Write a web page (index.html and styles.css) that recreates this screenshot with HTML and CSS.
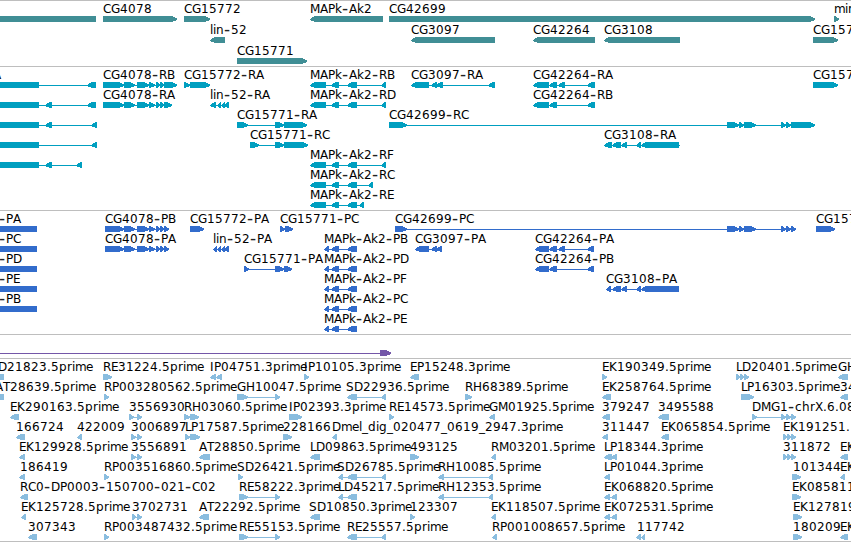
FILE: index.html
```html
<!DOCTYPE html>
<html lang="en">
<head>
  <meta charset="UTF-8" />
  <title>Genome Browser</title>
  <link rel="stylesheet" href="styles.css">
</head>
<body>
  <div class="browser">
    <div class="track genes" id="genes"></div>
    <div class="track transcripts" id="transcripts"></div>
    <div class="track proteins" id="proteins"></div>
    <div class="track span" id="span"></div>
    <div class="track ests" id="ests"></div>
  </div>
  <script src="tracks.js"></script>
</body>
</html>
```
FILE: styles.css
```css
body {
  margin: 0;
  background-color: #fff;
  overflow: hidden;
}

.browser {
  display: flex;
  flex-direction: column;
  width: 851px;
  height: 541px;
  border-bottom: 1px solid #bebebe;
}

.track {
  display: flex;
  flex-direction: column;
  border-top: 1px solid #bebebe;
}

.row {
  display: block;
  width: 851px;
  height: 20px;
  overflow: visible;
  shape-rendering: crispEdges;
}

.row text {
  font-family: "DejaVu Sans", sans-serif;
  font-size: 12px;
  fill: #000;
}

/* wide dash */
.row .dash {
  font-size: 17px;
  fill: #222;
}

.genes {
  padding-bottom: 2px;
  color: #408e95;
}

.genes .row {
  height: 21px;
}

.transcripts {
  padding-bottom: 3px;
  color: #009fc0;
}

.proteins {
  padding-bottom: 3px;
  color: #326ccc;
}

.span {
  padding-bottom: 3px;
  color: #7457a8;
}

.ests {
  color: #8abddf;
}

.row path {
  fill: currentColor;
}
```
FILE: tracks.js
```js
// feature: [label x, label, strand, "start-end start-end ...", line start, line end]
const cds = "124-135 137-149 149-155 156-160 160-164 ";
const mapk = "310-326 331-339 347-357 ";
const mapkP = "324-329 331-339 347-357";
const tail = "727-739 739-744 744-756 781-786 786-791 ";
const rna42264 = "533-549 549-557 ";

const tracks = {
  genes: [
    [
      [0, "", "", "0-96"],
      [103, "CG4078", ">", "103-177"],
      [184, "CG15772", ">", "184-210"],
      [310, "MAPk-Ak2", "<", "310-383"],
      [389, "CG42699", ">", "389-815"],
      [834, "mir", ">", "834-839"]
    ],
    [
      [210, "lin-52", "<", "210-225"],
      [411, "CG3097", "<", "411-495"],
      [533, "CG42264", "<", "533-595"],
      [604, "CG3108", "<", "604-680"],
      [813, "CG157", ">", "813-838"]
    ],
    [[237, "CG15771", ">", "237-307"]]
  ],
  transcripts: [
    [
      [-7, "A", "", "0-39"],
      [0, "", "<", "87-96", 39],
      [103, "CG4078-RB", ">", "103-124 " + cds + "164-177"],
      [184, "CG15772-RA", ">", "184-190 190-210"],
      [310, "MAPk-Ak2-RB", "<", mapk + "381-386"],
      [411, "CG3097-RA", "<", "411-429 431-437 436-443 488-495"],
      [533, "CG42264-RA", "<", rna42264 + "558-565 587-595"],
      [813, "CG157", ">", "813-838"]
    ],
    [
      [0, "", "", "0-39"],
      [0, "", "<", "45-52 87-96", 39],
      [103, "CG4078-RA", ">", "103-124 " + cds + "164-172"],
      [210, "lin-52-RA", "<", "210-216 217-221 221-225 224-229"],
      [310, "MAPk-Ak2-RD", "<", mapk + "381-386"],
      [533, "CG42264-RB", "<", rna42264 + "587-595"]
    ],
    [
      [0, "", "", "0-39"],
      [0, "", "<", "45-52 91-97", 39],
      [237, "CG15771-RA", ">", "237-248 275-284 284-307"],
      [389, "CG42699-RC", ">", "389-407 " + tail + "791-815"]
    ],
    [
      [0, "", "", "0-39"],
      [0, "", "<", "91-97", 39],
      [250, "CG15771-RC", ">", "250-259 275-284 284-308"],
      [604, "CG3108-RA", "<", "604-612 612-621 621-627 636-641 641-679", 604, 680]
    ],
    [
      [0, "", "", "0-39"],
      [0, "", "<", "45-52 76-82", 39],
      [310, "MAPk-Ak2-RF", "<", mapk + "381-386"]
    ],
    [[310, "MAPk-Ak2-RC", "<", mapk + "368-373"]],
    [[310, "MAPk-Ak2-RE", "<", mapk + "359-364"]]
  ],
  proteins: [
    [
      [-1, "-PA", "", "0-37"],
      [105, "CG4078-PB", ">", "105-124 " + cds + "164-169"],
      [190, "CG15772-PA", ">", "190-204"],
      [280, "CG15771-PC", ">", "280-285 285-293"],
      [395, "CG42699-PC", ">", "395-407 " + tail + "791-796"],
      [816, "CG157", ">", "816-835"]
    ],
    [
      [-1, "-PC", "", "0-37"],
      [105, "CG4078-PA", ">", "105-124 " + cds + "164-169"],
      [213, "lin-52-PA", "<", "213-217 217-221 221-225 224-229"],
      [324, "MAPk-Ak2-PB", "<", mapkP],
      [415, "CG3097-PA", "<", "415-429 431-437 436-442"],
      [535, "CG42264-PA", "<", "535-549 549-557 558-565 587-594"]
    ],
    [
      [-1, "-PD", "", "0-37"],
      [244, "CG15771-PA", ">", "244-249 275-284 284-292"],
      [324, "MAPk-Ak2-PD", "<", mapkP],
      [535, "CG42264-PB", "<", "535-549 549-557 587-594"]
    ],
    [
      [-1, "-PE", "", "0-37"],
      [324, "MAPk-Ak2-PF", "<", mapkP],
      [606, "CG3108-PA", "<", "606-611 612-621 621-627 636-641 641-679"]
    ],
    [
      [-1, "-PB", "", "0-37"],
      [324, "MAPk-Ak2-PC", "<", mapkP]
    ],
    [[324, "MAPk-Ak2-PE", "<", mapkP]]
  ],
  span: [
    [[0, "", ">", "380-391", 0]]
  ],
  ests: [
    [
      [-8, "LD21823.5prime", "", "0-4"],
      [103, "RE31224.5prime", ">", "103-112"],
      [210, "IP04751.3prime", "<", "210-216 216-222"],
      [304, "IP10105.3prime", ">", "304-309"],
      [410, "EP15248.3prime", "<", "410-419"],
      [602, "EK190349.5prime", ">", "602-607"],
      [736, "LD20401.5prime", ">", "736-740 740-744 744-749"],
      [838, "GH", "<", "838-848"]
    ],
    [
      [-5, "AT28639.5prime", "", "0-4"],
      [104, "RP003280562.5prime", ">", "104-109"],
      [237, "GH10047.5prime", ">", "237-248 275-280"],
      [346, "SD22936.5prime", "<", "347-357 381-386"],
      [465, "RH68389.5prime", ">", "465-472"],
      [602, "EK258764.5prime", "<", "602-611"],
      [741, "LP16303.5prime", ">", "741-745 743-754"],
      [840, "34", "<", "840-848"]
    ],
    [
      [10, "EK290163.5prime", "<", "10-19"],
      [129, "3556930", ">", "129-134 137-142"],
      [184, "RH03060.5prime", ">", "184-190 190-199"],
      [289, "IP02393.3prime", ">", "289-302"],
      [389, "RE14573.5prime", ">", "389-394"],
      [489, "GM01925.5prime", "<", "489-495"],
      [602, "379247", "<", "602-610"],
      [658, "3495588", "<", "658-669"],
      [752, "DMG1-chrX.6.08", ">", "752-757 781-786 786-791 791-796"]
    ],
    [
      [16, "166724", "<", "16-25"],
      [77, "422009", "<", "77-82"],
      [131, "3006897", ">", "131-136 137-142"],
      [185, "LP17587.5prime", ">", "185-190 190-200"],
      [283, "228166", ">", "283-292"],
      [332, "Dmel_dig_020477_0619_2947.3prime", "<", "332-337"],
      [602, "311447", "<", "602-608"],
      [661, "EK065854.5prime", "<", "661-669"],
      [783, "EK191251.", ">", "783-787 787-791 791-796"]
    ],
    [
      [19, "EK129928.5prime", "<", "19-25"],
      [131, "3556891", ">", "131-136 137-142"],
      [199, "AT28850.5prime", "<", "199-210"],
      [310, "LD09863.5prime", "<", "310-320"],
      [410, "493125", ">", "410-419"],
      [491, "RM03201.5prime", "<", "491-496"],
      [604, "LP18344.3prime", "<", "604-612 611-617"],
      [783, "311872", ">", "783-787 787-791 791-796"],
      [840, "EK", "<", "840-848"]
    ],
    [
      [20, "186419", "<", "19-25"],
      [104, "RP003516860.5prime", ">", "104-109"],
      [237, "SD26421.5prime", ">", "238-243"],
      [337, "SD26785.5prime", "<", "338-343 347-357 381-386"],
      [438, "RH10085.5prime", "<", "438-444 488-493"],
      [604, "LP01044.3prime", "<", "604-610"],
      [793, "101344", ">", "792-801"],
      [840, "EK", "<", "840-845"]
    ],
    [
      [20, "RC0-DP0003-150700-021-C02", "<", "20-28"],
      [239, "RE58222.3prime", ">", "239-248 275-280"],
      [338, "LD45217.5prime", "<", "338-343 347-357"],
      [438, "RH12353.5prime", "<", "438-444 488-493"],
      [604, "EK068820.5prime", "<", "604-610 611-617"],
      [792, "EK085811", ">", "792-801"]
    ],
    [
      [21, "EK125728.5prime", "<", "21-26"],
      [132, "3702731", ">", "132-136 137-142"],
      [199, "AT22292.5prime", "<", "199-209"],
      [309, "SD10850.3prime", "<", "310-320"],
      [410, "123307", ">", "410-415"],
      [491, "EK118507.5prime", "<", "491-496"],
      [604, "EK072531.5prime", "<", "604-610 611-617"],
      [793, "EK127819", ">", "793-802"]
    ],
    [
      [28, "307343", "<", "28-37"],
      [104, "RP003487432.5prime", ">", "104-109"],
      [239, "RE55153.5prime", ">", "239-248 275-280"],
      [347, "RE25557.5prime", "<", "347-357 381-386"],
      [492, "RP001008657.5prime", "<", "492-497"],
      [637, "117742", "<", "636-641 641-645"],
      [793, "180209", ">", "793-802"],
      [840, "EK", "<", "840-848"]
    ]
  ]
};

// whole pixel advance of each letter, digits are 8
const advance = {
  A: 8, B: 8, C: 8, D: 9, E: 7, F: 7, G: 9, H: 9, I: 4, K: 8, L: 6, M: 10, P: 7, R: 8, S: 8, T: 7, X: 8,
  c: 7, d: 8, e: 7, g: 8, h: 8, i: 3, k: 7, l: 3, m: 11, n: 8, p: 8, r: 5, "-": 7, "_": 6, ".": 4
};
const NS = "http://www.w3.org/2000/svg";

function add(parent, name, attrs) {
  const el = document.createElementNS(NS, name);
  for (const key in attrs) el.setAttribute(key, attrs[key]);
  parent.appendChild(el);
  return el;
}

// all outlines run clockwise so that they merge with the line
function exon(a, b, strand) {
  const head = Math.min(5, b - a - 1);
  if (strand === ">") return `M${a} 15H${b - head}L${b - 1} 17L${b} 18V19L${b - head} 21H${a}Z`;
  if (strand === "<") return `M${a + head} 15H${b}V21H${a + head}L${a} 19V18L${a + 1} 17Z`;
  return `M${a} 15H${b}V21H${a}Z`;
}

for (const id in tracks) {
  for (const features of tracks[id]) {
    const row = add(document.getElementById(id), "svg", { class: "row" });
    for (const [x, label, strand, blocks, from, to] of features) {
      const exons = blocks.split(" ").map(b => b.split("-").map(Number));
      const start = from ?? exons[0][0];
      const end = to ?? exons[exons.length - 1][1];
      let d = `M${start} 18H${end}V19H${start}Z`;
      for (const [a, b] of exons) d += exon(a, b, strand);
      add(row, "path", { d });
      if (!label) continue;
      const text = add(row, "text", {});
      let pen = x;
      for (const part of label.split(/(-)/)) {
        if (!part) continue;
        const xs = [];
        for (const ch of part) {
          xs.push(pen);
          pen += advance[ch] || 8;
        }
        const dash = part === "-";
        const span = add(text, "tspan", { x: xs.join(" "), y: dash ? 13 : 12 });
        if (dash) span.setAttribute("class", "dash");
        span.textContent = part;
      }
    }
  }
}
```
